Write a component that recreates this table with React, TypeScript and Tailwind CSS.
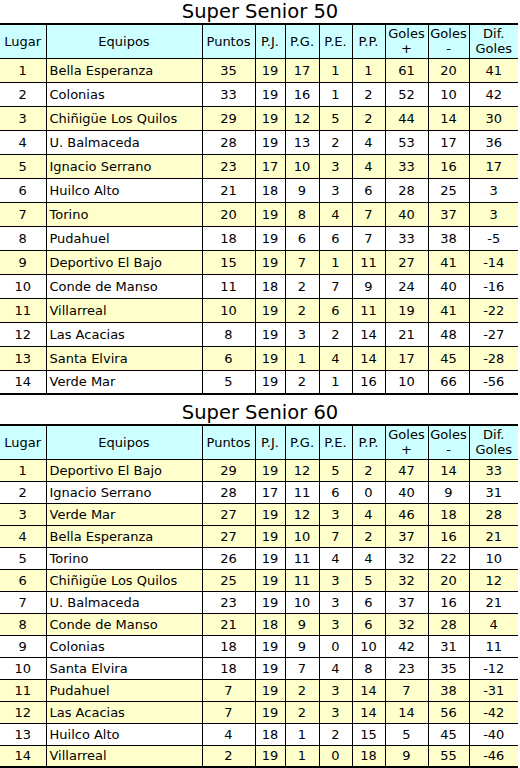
type Row = [number, string, number, number, number, number, number, number, number, number];

const senior50: Row[] = [
  [1, 'Bella Esperanza', 35, 19, 17, 1, 1, 61, 20, 41],
  [2, 'Colonias', 33, 19, 16, 1, 2, 52, 10, 42],
  [3, 'Chiñigüe Los Quilos', 29, 19, 12, 5, 2, 44, 14, 30],
  [4, 'U. Balmaceda', 28, 19, 13, 2, 4, 53, 17, 36],
  [5, 'Ignacio Serrano', 23, 17, 10, 3, 4, 33, 16, 17],
  [6, 'Huilco Alto', 21, 18, 9, 3, 6, 28, 25, 3],
  [7, 'Torino', 20, 19, 8, 4, 7, 40, 37, 3],
  [8, 'Pudahuel', 18, 19, 6, 6, 7, 33, 38, -5],
  [9, 'Deportivo El Bajo', 15, 19, 7, 1, 11, 27, 41, -14],
  [10, 'Conde de Manso', 11, 18, 2, 7, 9, 24, 40, -16],
  [11, 'Villarreal', 10, 19, 2, 6, 11, 19, 41, -22],
  [12, 'Las Acacias', 8, 19, 3, 2, 14, 21, 48, -27],
  [13, 'Santa Elvira', 6, 19, 1, 4, 14, 17, 45, -28],
  [14, 'Verde Mar', 5, 19, 2, 1, 16, 10, 66, -56],
];

const senior60: Row[] = [
  [1, 'Deportivo El Bajo', 29, 19, 12, 5, 2, 47, 14, 33],
  [2, 'Ignacio Serrano', 28, 17, 11, 6, 0, 40, 9, 31],
  [3, 'Verde Mar', 27, 19, 12, 3, 4, 46, 18, 28],
  [4, 'Bella Esperanza', 27, 19, 10, 7, 2, 37, 16, 21],
  [5, 'Torino', 26, 19, 11, 4, 4, 32, 22, 10],
  [6, 'Chiñigüe Los Quilos', 25, 19, 11, 3, 5, 32, 20, 12],
  [7, 'U. Balmaceda', 23, 19, 10, 3, 6, 37, 16, 21],
  [8, 'Conde de Manso', 21, 18, 9, 3, 6, 32, 28, 4],
  [9, 'Colonias', 18, 19, 9, 0, 10, 42, 31, 11],
  [10, 'Santa Elvira', 18, 19, 7, 4, 8, 23, 35, -12],
  [11, 'Pudahuel', 7, 19, 2, 3, 14, 7, 38, -31],
  [12, 'Las Acacias', 7, 19, 2, 3, 14, 14, 56, -42],
  [13, 'Huilco Alto', 4, 18, 1, 2, 15, 5, 45, -40],
  [14, 'Villarreal', 2, 19, 1, 0, 18, 9, 55, -46],
];

// which rows get the yellow band
const yellow50 = [1, 3, 5, 7, 9, 11, 13];
const yellow60 = [1, 3, 4, 6, 8, 11, 12, 14];

const widths = [46, 156, 53, 30, 34, 33, 33, 43, 41, 49];

function fmt(n: number) {
  return n < 0 ? '-' + Math.abs(n) : String(n);
}

function Standings({ title, rows, yellow, rowH, titleH }: { title: string; rows: Row[]; yellow: number[]; rowH: string; titleH: string }) {
  return (
    <section>
      <h2 className={`${titleH} flex items-end justify-center text-[19.5px] leading-[22px] text-black`}>{title}</h2>
      <table className="w-[518px] table-fixed border-collapse border-y-2 border-black text-[13px] leading-[15px] text-black">
        <colgroup>
          {widths.map((w, i) => (
            <col key={i} style={{ width: w }} />
          ))}
        </colgroup>
        <thead>
          <tr className="h-[34px] bg-[#ccffff]">
            <th className="border-r border-b border-black font-normal">Lugar</th>
            <th className="border-x border-b border-black font-normal">Equipos</th>
            <th className="border-x border-b border-black font-normal">Puntos</th>
            <th className="border-x border-b border-black font-normal">P.J.</th>
            <th className="border-x border-b border-black font-normal">P.G.</th>
            <th className="border-x border-b border-black font-normal">P.E.</th>
            <th className="border-x border-b border-black font-normal">P.P.</th>
            <th className="border-x border-b border-black font-normal">Goles<br />+</th>
            <th className="border-x border-b border-black font-normal">Goles<br />-</th>
            <th className="border-l border-b border-black font-normal">Dif.<br />Goles</th>
          </tr>
        </thead>
        <tbody>
          {rows.map((r) => (
            <tr key={r[0]} className={`${rowH} ${yellow.includes(r[0]) ? 'bg-[#ffffcc]' : 'bg-white'}`}>
              <td className="border-r border-b border-black text-center">{r[0]}</td>
              <td className="border-x border-b border-black pl-[3px] whitespace-nowrap">{r[1]}</td>
              {r.slice(2).map((v, i) => (
                <td key={i} className={`${i === 7 ? 'border-l' : 'border-x'} border-b border-black text-center`}>
                  {fmt(v as number)}
                </td>
              ))}
            </tr>
          ))}
        </tbody>
      </table>
    </section>
  );
}

export default function App() {
  return (
    <div className="w-[520px] bg-white" style={{ fontFamily: '"DejaVu Sans", Verdana, sans-serif' }}>
      <Standings title="Super Senior 50" rows={senior50} yellow={yellow50} rowH="h-[24px]" titleH="h-[23px]" />
      <Standings title="Super Senior 60" rows={senior60} yellow={yellow60} rowH="h-[22px]" titleH="h-[29px]" />
    </div>
  );
}
